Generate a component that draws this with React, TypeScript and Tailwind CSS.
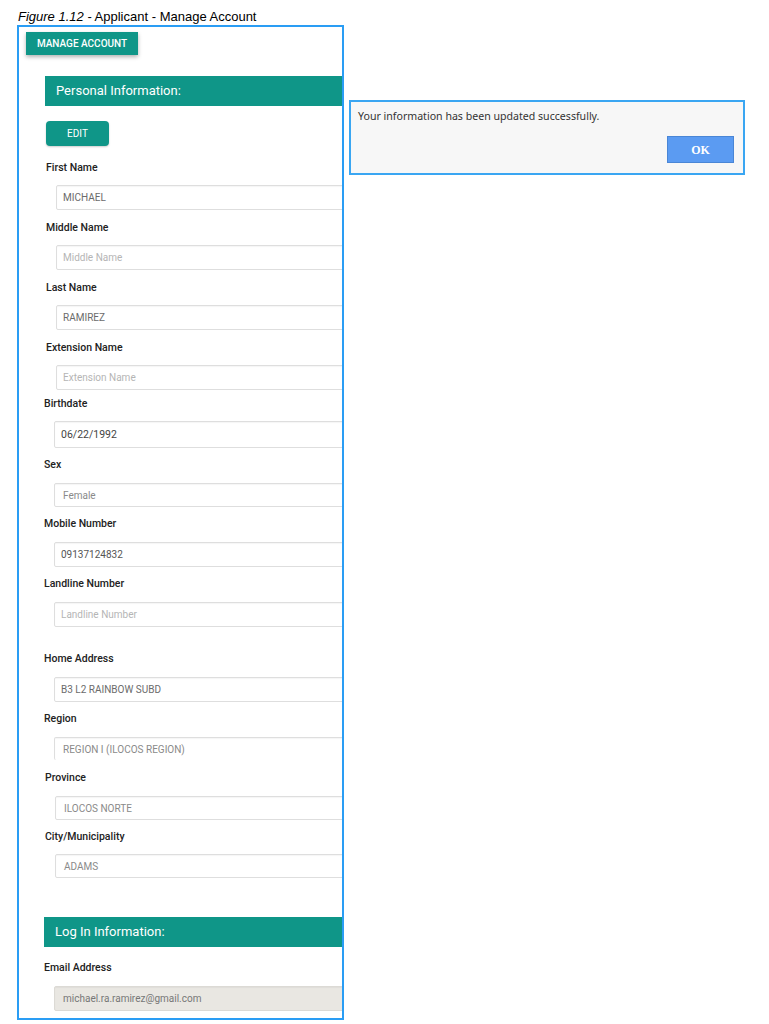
import React from "react";

const labelCls = "block text-[10.5px] leading-[14px] font-medium text-[#222]";
const inputBase =
  "w-[320px] border rounded-[2px] flex items-center pl-[6px] text-[10px] text-[#707070] shadow-[inset_0_1px_1px_rgba(0,0,0,0.04)]";
const wb = "bg-white border-[#dedede]";

function Field({
  label,
  value,
  placeholder,
  wrap,
  labelMt,
  inputMt,
  inputCls,
  valueCls,
}: {
  label: string;
  value?: string;
  placeholder?: string;
  wrap: string;
  labelMt: string;
  inputMt: string;
  inputCls: string;
  valueCls?: string;
}) {
  return (
    <div className={wrap}>
      <div className={labelMt}>
        <span className={labelCls}>{label}</span>
      </div>
      <div className={`${inputMt} ${inputCls}`}>
        {value ? (
          <span className={valueCls ?? "text-[#6b6b6b]"}>{value}</span>
        ) : (
          <span className="text-[#b5b5b5]">{placeholder}</span>
        )}
      </div>
    </div>
  );
}

export default function App() {
  return (
    <div
      className="w-[769px] h-[1024px] bg-white overflow-hidden"
      style={{ fontFamily: "Roboto, 'Liberation Sans', sans-serif" }}
    >
      <div className="h-[25px] pl-[18px] pt-[9px] text-[13px] leading-[15px] text-black font-['Liberation_Sans',Arial,sans-serif]">
        <span className="italic">Figure 1.12</span> - Applicant - Manage Account
      </div>
      <div className="flex items-start">
        <div className="ml-[17px] w-[327px] h-[995px] border-2 border-[#2a9df4] overflow-hidden shrink-0">
          <div className="w-[600px]">
            <div className="ml-[7px] mt-[5px] w-[112px] h-[23px] bg-[#0f9688] text-white text-[10px] font-medium flex items-center justify-center shadow-[0_2px_4px_rgba(0,0,0,0.3)]">
              MANAGE ACCOUNT
            </div>
            <div className="ml-[26px] mt-[21px] h-[30px] bg-[#0f9688] text-white text-[13px] flex items-center pl-[11px]">
              Personal Information:
            </div>
            <div className="ml-[27px] mt-[15px] w-[63px] h-[25px] rounded-[4px] bg-[#0f9688] text-white text-[10px] flex items-center justify-center shadow-[0_1px_2px_rgba(0,0,0,0.2)]">
              EDIT
            </div>

            <Field wrap="ml-[27px]" labelMt="mt-[15px]" inputMt="mt-[10px] ml-[10px]" inputCls={`${inputBase} ${wb} h-[25px]`} label="First Name" value="MICHAEL" />
            <Field wrap="ml-[27px]" labelMt="mt-[11px]" inputMt="mt-[10px] ml-[10px]" inputCls={`${inputBase} ${wb} h-[25px]`} label="Middle Name" placeholder="Middle Name" />
            <Field wrap="ml-[27px]" labelMt="mt-[11px]" inputMt="mt-[10px] ml-[10px]" inputCls={`${inputBase} ${wb} h-[25px]`} label="Last Name" value="RAMIREZ" />
            <Field wrap="ml-[27px]" labelMt="mt-[11px]" inputMt="mt-[10px] ml-[10px]" inputCls={`${inputBase} ${wb} h-[25px]`} label="Extension Name" placeholder="Extension Name" />
            <Field wrap="ml-[25px]" labelMt="mt-[7px]" inputMt="mt-[10px] ml-[10px]" inputCls={`${inputBase} ${wb} h-[27px]`} label="Birthdate" value="06/22/1992" valueCls="text-[#444] text-[10.5px]" />
            <Field wrap="ml-[25px]" labelMt="mt-[10px]" inputMt="mt-[11px] ml-[10px]" inputCls={`${inputBase} ${wb} h-[24px] pl-[8px]`} label="Sex" value="Female" valueCls="text-[#8a8a8a]" />
            <Field wrap="ml-[25px]" labelMt="mt-[10px]" inputMt="mt-[11px] ml-[10px]" inputCls={`${inputBase} ${wb} h-[25px]`} label="Mobile Number" value="09137124832" valueCls="text-[#555]" />
            <Field wrap="ml-[25px]" labelMt="mt-[10px]" inputMt="mt-[11px] ml-[10px]" inputCls={`${inputBase} ${wb} h-[25px]`} label="Landline Number" placeholder="Landline Number" />
            <Field wrap="ml-[25px]" labelMt="mt-[25px]" inputMt="mt-[11px] ml-[10px]" inputCls={`${inputBase} ${wb} h-[25px]`} label="Home Address" value="B3 L2 RAINBOW SUBD" />
            <Field wrap="ml-[25px]" labelMt="mt-[10px]" inputMt="mt-[11px] ml-[10px]" inputCls={`${inputBase} ${wb} h-[23px] border-b-0 pl-[8px]`} label="Region" value="REGION I (ILOCOS REGION)" valueCls="text-[#8a8a8a]" />
            <Field wrap="ml-[26px]" labelMt="mt-[11px]" inputMt="mt-[11px] ml-[10px]" inputCls={`${inputBase} ${wb} h-[24px] pl-[8px]`} label="Province" value="ILOCOS NORTE" valueCls="text-[#8a8a8a]" />
            <Field wrap="ml-[26px]" labelMt="mt-[10px]" inputMt="mt-[10px] ml-[10px]" inputCls={`${inputBase} ${wb} h-[24px] pl-[8px]`} label="City/Municipality" value="ADAMS" valueCls="text-[#8a8a8a]" />

            <div className="ml-[25px] mt-[39px] h-[30px] bg-[#0f9688] text-white text-[13px] flex items-center pl-[11px]">
              Log In Information:
            </div>
            <Field wrap="ml-[25px]" labelMt="mt-[14px]" inputMt="mt-[11px] ml-[10px]" inputCls={`${inputBase} h-[25px] bg-[#e9e7e2] border-[#dcdad5] pl-[8px]`} label="Email Address" value="michael.ra.ramirez@gmail.com" valueCls="text-[#777]" />
          </div>
        </div>

        <div className="ml-[5px] mt-[75px] w-[396px] h-[75px] border-2 border-[#3aa6f2] bg-[#f7f7f7] flex flex-col">
          <div className="pl-[7px] pt-[7px] text-[10.6px] leading-[14px] text-[#333] font-['Noto_Sans',sans-serif]">
            Your information has been updated successfully.
          </div>
          <div className="flex justify-end pr-[9px] mt-[13px]">
            <div className="w-[67px] h-[27px] bg-[#5b9bf2] border border-[#4a86d6] flex items-center justify-center text-white text-[12px] font-bold font-['Liberation_Serif',serif]">
              OK
            </div>
          </div>
        </div>
      </div>
    </div>
  );
}
